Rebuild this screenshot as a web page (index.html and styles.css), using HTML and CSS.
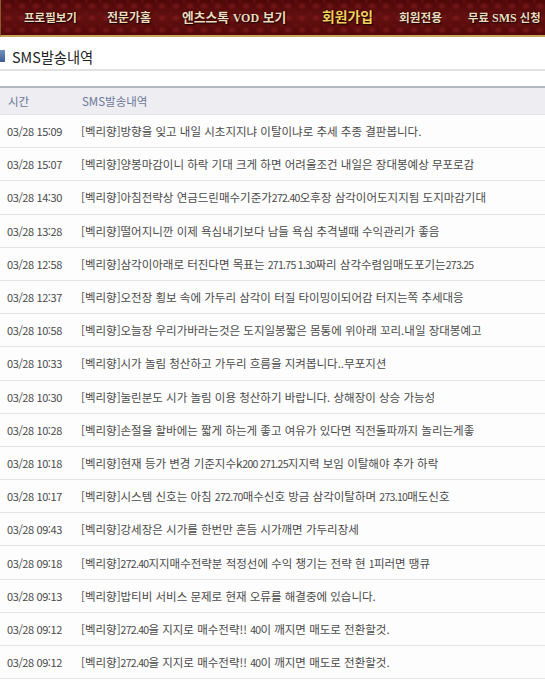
FILE: index.html
```html
<!DOCTYPE html>
<html lang="ko">
<head>
<meta charset="utf-8">
<link rel="stylesheet" href="styles.css">
</head>
<body>
<div class="nav">
  <span class="nav-item n1">프로필보기</span>
  <span class="nav-item n2">전문가홈</span>
  <span class="nav-item n3">엔츠스톡 <b class="lat">VOD</b> 보기</span>
  <span class="nav-item n4 active">회원가입</span>
  <span class="nav-item n5">회원전용</span>
  <span class="nav-item n6">무료 <b class="lat">SMS</b> 신청</span>
</div>
<div class="title"><span class="mark"></span><span class="title-text">SMS발송내역</span></div>
<div class="table">
  <div class="row head"><span class="c-time">시간</span><span class="c-msg">SMS발송내역</span></div>
  <div class="row"><span class="c-time">03/28 15:09</span><span class="c-msg">[벡리향]방향을 잊고 내일 시초지지냐 이탈이냐로 추세 추종 결판봅니다.</span></div>
  <div class="row"><span class="c-time">03/28 15:07</span><span class="c-msg">[벡리향]양봉마감이니 하락 기대 크게 하면 어려울조건 내일은 장대봉예상 무포로감</span></div>
  <div class="row"><span class="c-time">03/28 14:30</span><span class="c-msg">[벡리향]아침전략상 연금드린매수기준가<i class="n">272.40</i>오후장 삼각이어도지지됨 도지마감기대</span></div>
  <div class="row"><span class="c-time">03/28 13:28</span><span class="c-msg">[벡리향]떨어지니깐 이제 욕심내기보다 남들 욕심 추격낼때 수익관리가 좋음</span></div>
  <div class="row"><span class="c-time">03/28 12:58</span><span class="c-msg">[벡리향]삼각이아래로 터진다면 목표는 <i class="n">271.75 1.30</i>짜리 삼각수렴임매도포기는<i class="n">273.25</i></span></div>
  <div class="row"><span class="c-time">03/28 12:37</span><span class="c-msg">[벡리향]오전장 횡보 속에 가두리 삼각이 터질 타이밍이되어감 터지는쪽 추세대응</span></div>
  <div class="row"><span class="c-time">03/28 10:58</span><span class="c-msg">[벡리향]오늘장 우리가바라는것은 도지일봉짧은 몸통에 위아래 꼬리.내일 장대봉예고</span></div>
  <div class="row"><span class="c-time">03/28 10:33</span><span class="c-msg">[벡리향]시가 놀림 청산하고 가두리 흐름을 지켜봅니다..무포지션</span></div>
  <div class="row"><span class="c-time">03/28 10:30</span><span class="c-msg">[벡리향]눌린분도 시가 놀림 이용 청산하기 바랍니다. 상해장이 상승 가능성</span></div>
  <div class="row"><span class="c-time">03/28 10:28</span><span class="c-msg">[벡리향]손절을 할바에는 짧게 하는게 좋고 여유가 있다면 직전돌파까지 놀리는게좋</span></div>
  <div class="row"><span class="c-time">03/28 10:18</span><span class="c-msg">[벡리향]현재 등가 변경 기준지수k<i class="n">200 271.25</i>지지력 보임 이탈해야 추가 하락</span></div>
  <div class="row"><span class="c-time">03/28 10:17</span><span class="c-msg">[벡리향]시스템 신호는 아침 <i class="n">272.70</i>매수신호 방금 삼각이탈하며 <i class="n">273.10</i>매도신호</span></div>
  <div class="row"><span class="c-time">03/28 09:43</span><span class="c-msg">[벡리향]강세장은 시가를 한번만 흔듬 시가깨면 가두리장세</span></div>
  <div class="row"><span class="c-time">03/28 09:18</span><span class="c-msg">[벡리향]<i class="n">272.40</i>지지매수전략분 적정선에 수익 챙기는 전략 현 <i class="n">1</i>피러면 땡큐</span></div>
  <div class="row"><span class="c-time">03/28 09:13</span><span class="c-msg">[벡리향]밥티비 서비스 문제로 현재 오류를 해결중에 있습니다.</span></div>
  <div class="row"><span class="c-time">03/28 09:12</span><span class="c-msg">[벡리향]<i class="n">272.40</i>을 지지로 매수전략!! <i class="n">40</i>이 깨지면 매도로 전환할것.</span></div>
  <div class="row"><span class="c-time">03/28 09:12</span><span class="c-msg">[벡리향]<i class="n">272.40</i>을 지지로 매수전략!! <i class="n">40</i>이 깨지면 매도로 전환할것.</span></div>
</div>
</body>
</html>
```
FILE: styles.css
```css
html, body {
  margin: 0;
  padding: 0;
  background: #ffffff;
}
body {
  font-family: "Noto Sans CJK KR", "Noto Sans", sans-serif;
  width: 545px;
  overflow: hidden;
}
.nav {
  height: 35px;
  border-bottom: 2px solid #c9a35a;
  border-left: 1px solid #8a5a2a;
  background-color: #580a0d;
  background-image:
    radial-gradient(ellipse 5px 4px at 50% 50%, rgba(150, 35, 38, 0.55) 0, rgba(150, 35, 38, 0) 100%),
    radial-gradient(ellipse 4px 5px at 0 0, rgba(120, 20, 24, 0.6) 0, rgba(120, 20, 24, 0) 100%),
    linear-gradient(180deg, #4f0709 0%, #62100f 50%, #530809 100%);
  background-size: 14px 12px, 14px 12px, 100% 100%;
  position: relative;
}
.nav-item {
  position: absolute;
  top: 8px;
  font-weight: 700;
  font-size: 12px;
  line-height: 18px;
  color: #eadcbd;
  text-shadow: 1px 1px 1px #1a0000, 0 0 2px #2a0000;
  white-space: nowrap;
}
.nav-item .lat {
  font-family: "Liberation Serif", serif;
  font-size: 12px;
  font-weight: 700;
}
.n1 { left: 23px; font-size: 11.5px; }
.n2 { left: 106px; }
.n3 { left: 181px; font-size: 12.8px; }
.n4 { left: 321px; }
.n5 { left: 398px; font-size: 11.7px; }
.n6 { left: 467px; font-size: 11.3px; }
.nav-item.active {
  color: #f2d25e;
  font-size: 13.9px;
  top: 7px;
}
.title {
  height: 32px;
  border-bottom: 2px solid #e3e3e3;
  display: flex;
  align-items: center;
}
.mark {
  width: 5px;
  height: 12px;
  background: linear-gradient(180deg, #7590c2, #3f5e96);
  margin-top: 6px;
}
.title-text {
  margin-left: 7px;
  margin-top: 6px;
  font-size: 14.3px;
  color: #222222;
}
.table {
  margin-top: 15px;
  border-top: 2px solid #b3b6c3;
}
.row {
  height: 32.2px;
  border-bottom: 1px solid #e5e5e5;
  display: flex;
  align-items: center;
  font-size: 11.5px;
  color: #4a4a4a;
  background: #fdfdfd;
  white-space: nowrap;
}
.row.head {
  height: 26px;
  background: #ededf2;
  color: #6c7897;
}
.c-time {
  width: 74px;
  padding-left: 7px;
  flex: none;
  font-size: 11px;
  letter-spacing: -0.4px;
}
.head .c-time {
  padding-left: 8px;
  font-size: 11.5px;
  letter-spacing: 0;
}
.c-msg {
  overflow: hidden;
}
.n {
  font-style: normal;
  font-size: 10.5px;
  letter-spacing: -0.7px;
}
```
